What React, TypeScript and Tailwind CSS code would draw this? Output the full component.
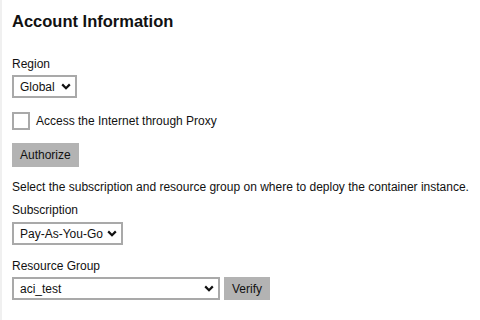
import { useState } from 'react'

function Chevron() {
  return (
    <svg width="10" height="7" viewBox="0 0 10 7" className="shrink-0">
      <path d="M1.2 1.4 L5 5.2 L8.8 1.4" fill="none" stroke="#111" strokeWidth="2.2" />
    </svg>
  )
}

function FakeSelect({ value, width }: { value: string; width: string }) {
  return (
    <div
      className={`flex items-center justify-between h-[23px] border-2 border-[#a9a9a9] bg-white pl-[6px] pr-[4px] text-[12px] text-[#111] ${width}`}
    >
      <span className="whitespace-nowrap">{value}</span>
      <Chevron />
    </div>
  )
}

export default function App() {
  const [proxy, setProxy] = useState(false)

  return (
    <div className="w-[480px] h-[320px] bg-white border-l-2 border-[#f0f0f0] pl-[10px] pt-[11px] font-['Liberation_Sans',Arial,sans-serif] text-[#111] overflow-hidden">
      <h1 className="text-[16.5px] font-bold leading-[20px] mb-[26px]">Account Information</h1>

      <div className="text-[12px] leading-[15px] mb-[3px]">Region</div>
      <FakeSelect value="Global" width="w-[65px]" />

      <label className="flex items-center gap-[6px] mt-[14px] h-[18px] text-[12px]">
        <span
          onClick={() => setProxy(!proxy)}
          className="w-[18px] h-[18px] border-2 border-[#a9a9a9] bg-white"
        />
        Access the Internet through Proxy
      </label>

      <button className="mt-[13px] h-[24px] px-[8px] bg-[#b3b3b3] text-[12px] text-[#111]">
        Authorize
      </button>

      <p className="mt-[13px] text-[12px] leading-[15px] whitespace-nowrap">
        Select the subscription and resource group on where to deploy the container instance.
      </p>
      <div className="mt-[8px] text-[12px] leading-[15px] mb-[4px]">Subscription</div>
      <FakeSelect value="Pay-As-You-Go" width="w-[111px]" />

      <div className="mt-[14px] text-[12px] leading-[15px] mb-[3px]">Resource Group</div>
      <div className="flex items-center gap-[4px]">
        <FakeSelect value="aci_test" width="w-[208px]" />
        <button className="h-[23px] px-[8px] bg-[#b3b3b3] text-[12px] text-[#111]">Verify</button>
      </div>
    </div>
  )
}
